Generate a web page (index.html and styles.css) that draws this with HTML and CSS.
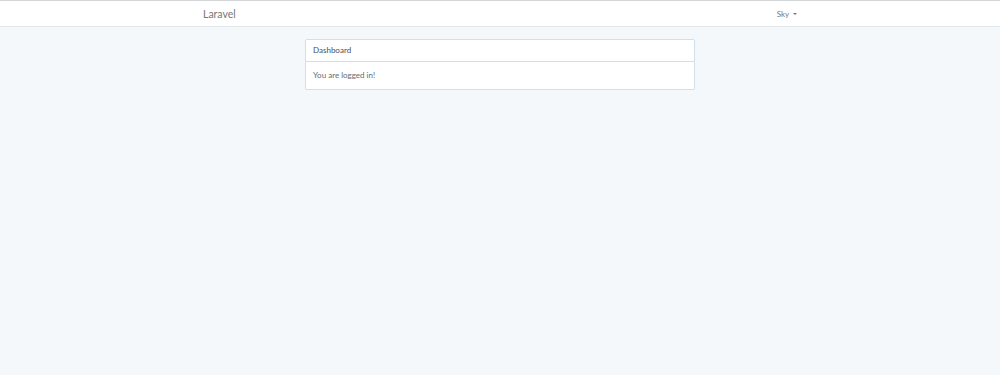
FILE: index.html
```html
<!DOCTYPE html>
<html>
<head>
    <meta charset="utf-8">
    <title>Laravel</title>
    <link rel="stylesheet" href="styles.css">
</head>
<body>
    <nav class="navbar">
        <div class="container nav-inner">
            <a class="brand" href="#">Laravel</a>
            <a class="user" href="#">Sky <span class="caret"></span></a>
        </div>
    </nav>

    <div class="container">
        <div class="panel">
            <div class="panel-heading">Dashboard</div>
            <div class="panel-body">You are logged in!</div>
        </div>
    </div>
</body>
</html>
```

FILE: styles.css
```css
body {
	margin: 0;
	background: #f5f8fa;
	font-family: Lato, "Open Sans", sans-serif;
	font-size: 8px;
	color: #636b6f;
}

a {
	text-decoration: none;
}

.navbar {
	background: #fff;
	border-top: 1px solid #d3d6d8;
	border-bottom: 1px solid #e0e6ea;
	height: 25px;
	margin-bottom: 12px;
}

.container {
	width: 600px;
	margin: 0 auto;
}

.nav-inner {
	display: flex;
	justify-content: space-between;
	align-items: center;
	height: 25px;
}

.brand {
	color: #777;
	font-size: 10.5px;
	margin-left: 3px;
}

.user {
	color: #777;
	font-size: 8px;
	margin-right: 3px;
}

.caret {
	display: inline-block;
	width: 0;
	height: 0;
	margin-left: 2px;
	vertical-align: middle;
	border-top: 2px solid #777;
	border-left: 2px solid transparent;
	border-right: 2px solid transparent;
}

.panel {
	width: 388px;
	margin: 0 auto;
	background: #fff;
	border: 1px solid #d3e0e9;
	border-radius: 2px;
	box-shadow: 0 1px 1px rgba(0, 0, 0, .05);
}

.panel-heading {
	height: 21px;
	line-height: 21px;
	padding: 0 7px;
	color: #4a4f52;
	border-bottom: 1px solid #d3e0e9;
}

.panel-body {
	height: 27px;
	line-height: 27px;
	padding: 0 7px;
}
```
